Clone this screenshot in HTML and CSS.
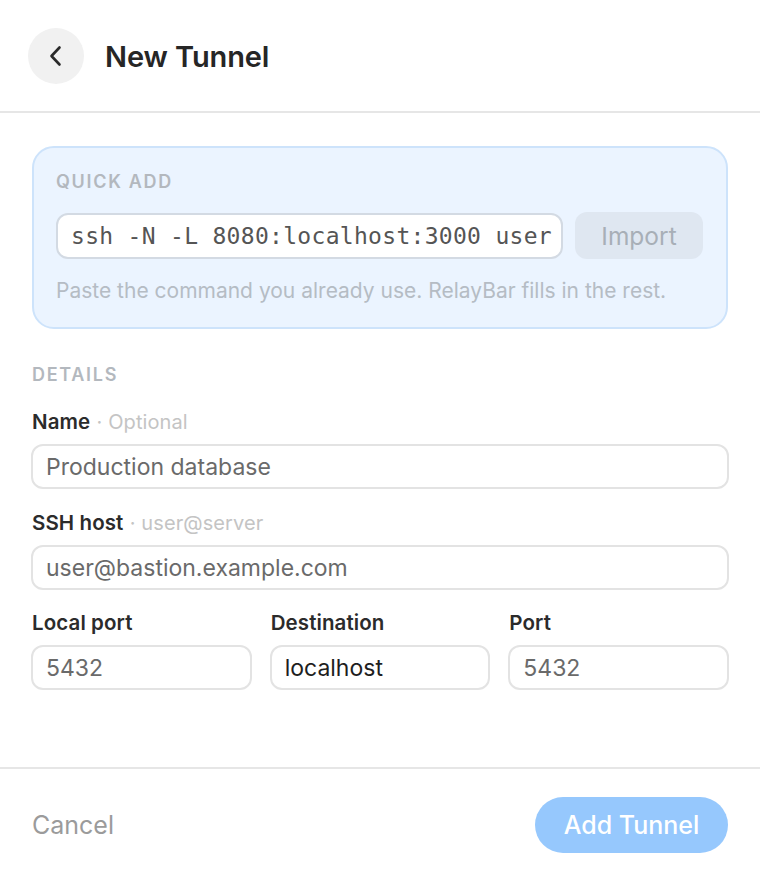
FILE: index.html
```html
<!DOCTYPE html>
<html>
<head>
<meta charset="utf-8">
<link rel="stylesheet" href="styles.css">
</head>
<body>
<div class="app">
  <header class="header">
    <button class="back" aria-label="Back">
      <svg width="24" height="24" viewBox="0 0 24 24"><path d="M15.5 3.5 L7.5 12 L15.5 20.5" fill="none" stroke="#2a2a2a" stroke-width="2.6" stroke-linecap="round" stroke-linejoin="round"/></svg>
    </button>
    <h1 class="title">New Tunnel</h1>
  </header>
  <main class="content">
    <section class="quick">
      <div class="section-label">QUICK ADD</div>
      <div class="quick-row">
        <div class="input mono">ssh -N -L 8080:localhost:3000 user</div>
        <button class="import">Import</button>
      </div>
      <p class="hint">Paste the command you already use. RelayBar fills in the rest.</p>
    </section>
    <div class="section-label details">DETAILS</div>
    <div class="field">
      <label class="label">Name <span class="aside">· Optional</span></label>
      <div class="input">Production database</div>
    </div>
    <div class="field">
      <label class="label">SSH host <span class="aside">· user@server</span></label>
      <div class="input">user@bastion.example.com</div>
    </div>
    <div class="grid3">
      <div class="field">
        <label class="label">Local port</label>
        <div class="input">5432</div>
      </div>
      <div class="field">
        <label class="label">Destination</label>
        <div class="input filled">localhost</div>
      </div>
      <div class="field">
        <label class="label">Port</label>
        <div class="input">5432</div>
      </div>
    </div>
  </main>
  <footer class="footer">
    <button class="cancel">Cancel</button>
    <button class="primary">Add Tunnel</button>
  </footer>
</div>
</body>
</html>
```
FILE: styles.css
```css
* { box-sizing: border-box; }
html, body { margin: 0; padding: 0; background: #fff; }
body {
  font-family: Inter, "Noto Sans", sans-serif;
  color: #2a2a2a;
  width: 760px;
  height: 880px;
  overflow: hidden;
}
.app { display: flex; flex-direction: column; height: 880px; }
button { font-family: inherit; border: none; background: none; padding: 0; cursor: pointer; }

.header {
  height: 113px;
  display: flex;
  align-items: center;
  padding: 0 28px;
  gap: 21px;
  border-bottom: 2px solid #e6e6e6;
  flex-shrink: 0;
}
.back {
  width: 56px; height: 56px;
  border-radius: 50%;
  background: #f1f1f1;
  display: flex; align-items: center; justify-content: center;
}
.title {
  margin: 0;
  font-size: 29px;
  font-weight: 600;
  letter-spacing: -0.1px;
  color: #262626;
  line-height: 34px;
  padding-top: 2px;
}

.content {
  flex: 1;
  padding: 33px 31px 0 31px;
}
.quick {
  margin: 0 1px;
  background: #ebf4ff;
  border: 2px solid #cde3fb;
  border-radius: 22px;
  padding: 24px 23px 24px 22px;
}
.section-label {
  font-size: 18px;
  font-weight: 600;
  letter-spacing: 1.7px;
  color: #b3b8be;
  line-height: 20px;
}
.quick-row {
  display: flex;
  gap: 12px;
  margin-top: 20px;
  align-items: center;
}
.input {
  height: 45px;
  border: 2px solid #e3e3e3;
  border-radius: 12px;
  background: #fff;
  padding: 0 13px;
  display: flex;
  align-items: center;
  font-size: 23px;
  color: #6a6a6a;
  white-space: nowrap;
  overflow: hidden;
}
.input.mono {
  flex: 1;
  height: 46px;
  font-family: "DejaVu Sans Mono", "Liberation Mono", monospace;
  font-size: 23px;
  letter-spacing: 0.3px;
  color: #555;
  border-color: #d3dae3;
}
.import {
  width: 128px;
  height: 47px;
  border-radius: 12px;
  background: #dfe7f1;
  color: #a8afb7;
  font-size: 24.5px;
}
.hint {
  margin: 20px 0 0;
  font-size: 21px;
  color: #b5bcc4;
  line-height: 24px;
}
.details { margin-top: 36px; margin-left: 1px; }
.field { display: flex; flex-direction: column; }
.label {
  display: block;
  height: 22px;
  font-size: 20.5px;
  font-weight: 600;
  color: #2b2b2b;
  line-height: 22px;
  margin: 23px 0 11px 1px;
  letter-spacing: 0.1px;
  white-space: nowrap;
}
.aside {
  font-weight: 400;
  font-size: 20px;
  line-height: 1;
  color: #c4c4c4;
  margin-left: 1px;
}
.details + .field .label { margin-top: 26px; }
.grid3 {
  display: grid;
  grid-template-columns: 1fr 1fr 1fr;
  gap: 18px;
  margin-top: 10px;
}
.grid3 .label { margin-top: 12px; }
.input.filled { color: #1e1e1e; }

.footer {
  height: 113px;
  border-top: 2px solid #e6e6e6;
  display: flex;
  align-items: center;
  justify-content: space-between;
  padding: 0 32px 0 32px;
  flex-shrink: 0;
}
.cancel {
  font-size: 25px;
  color: #9b9b9b;
}
.primary {
  width: 193px;
  height: 56px;
  border-radius: 28px;
  background: #96c8fd;
  color: #fff;
  font-size: 25px;
  font-weight: 500;
}
```
